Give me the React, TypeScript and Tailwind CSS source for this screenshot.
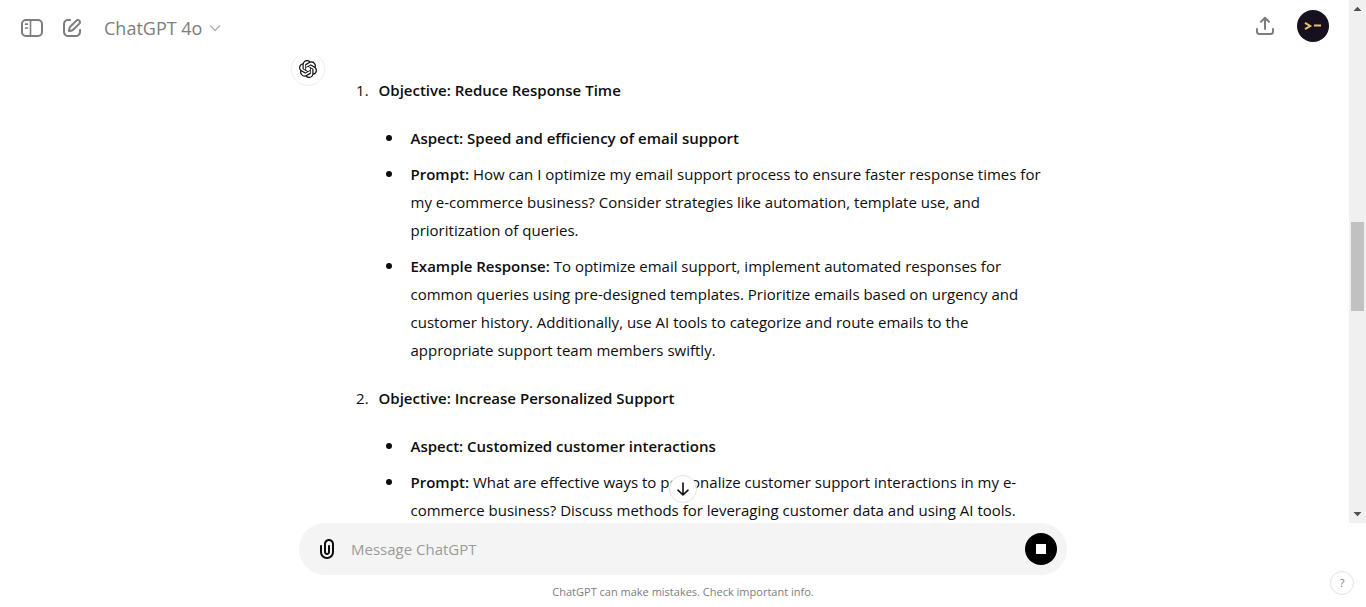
import { useState } from 'react';
import { SiOpenai } from 'react-icons/si';

const objectives = [
  {
    title: 'Objective: Reduce Response Time',
    points: [
      { label: 'Aspect: Speed and efficiency of email support', text: '' },
      {
        label: 'Prompt:',
        text: 'How can I optimize my email support process to ensure faster response times for my e-commerce business? Consider strategies like automation, template use, and prioritization of queries.',
      },
      {
        label: 'Example Response:',
        text: 'To optimize email support, implement automated responses for common queries using pre-designed templates. Prioritize emails based on urgency and customer history. Additionally, use AI tools to categorize and route emails to the appropriate support team members swiftly.',
      },
    ],
  },
  {
    title: 'Objective: Increase Personalized Support',
    points: [
      { label: 'Aspect: Customized customer interactions', text: '' },
      {
        label: 'Prompt:',
        text: 'What are effective ways to personalize customer support interactions in my e-commerce business? Discuss methods for leveraging customer data and using AI tools.',
      },
    ],
  },
];

function SidebarIcon() {
  return (
    <svg width="24" height="24" viewBox="0 0 24 24" fill="none" stroke="currentColor" strokeWidth="2" strokeLinecap="round">
      <rect x="2" y="4" width="20" height="16" rx="4" />
      <path d="M10.5 4v16" strokeWidth="1.6" />
      <path d="M5.6 8.2h1.8M5.6 12h1.8" strokeWidth="1.7" />
    </svg>
  );
}

function NewChatIcon() {
  return (
    <svg width="24" height="24" viewBox="0 0 24 24" fill="currentColor">
      <path
        fillRule="evenodd"
        clipRule="evenodd"
        d="M15.6729 3.91287C16.8918 2.69392 18.8682 2.69392 20.0871 3.91287C21.3061 5.13182 21.3061 7.10813 20.0871 8.32708L14.1499 14.2643C13.3849 15.0293 12.3925 15.5255 11.3215 15.6785L9.14142 15.9899C8.82983 16.0344 8.51546 15.9297 8.29289 15.7071C8.07033 15.4845 7.96554 15.1701 8.01005 14.8586L8.32149 12.6785C8.47449 11.6075 8.97072 10.615 9.7357 9.85006L15.6729 3.91287ZM18.6729 5.32708C18.235 4.88918 17.525 4.88918 17.0871 5.32708L11.1499 11.2643C10.6909 11.7233 10.3932 12.3187 10.3014 12.9613L10.1785 13.8215L11.0386 13.6986C11.6812 13.6068 12.2767 13.3091 12.7357 12.8501L18.6729 6.91287C19.1108 6.47497 19.1108 5.76499 18.6729 5.32708ZM11 3.99929C11.0004 4.55157 10.5531 4.99963 10.0008 5.00007C9.00227 5.00084 8.29769 5.00827 7.74651 5.06064C7.20685 5.11191 6.88488 5.20117 6.63803 5.32695C6.07354 5.61457 5.6146 6.07351 5.32698 6.63799C5.19279 6.90135 5.10062 7.24904 5.05118 7.8542C5.00078 8.47105 5 9.26336 5 10.4V13.6C5 14.7366 5.00078 15.5289 5.05118 16.1457C5.10062 16.7509 5.19279 17.0986 5.32698 17.3619C5.6146 17.9264 6.07354 18.3854 6.63803 18.673C6.90138 18.8072 7.24907 18.8993 7.85424 18.9488C8.47108 18.9992 9.26339 19 10.4 19H13.6C14.7366 19 15.5289 18.9992 16.1458 18.9488C16.7509 18.8993 17.0986 18.8072 17.362 18.673C17.9265 18.3854 18.3854 17.9264 18.673 17.3619C18.7988 17.1151 18.8881 16.7931 18.9393 16.2535C18.9917 15.7023 18.9991 14.9977 18.9999 13.9992C19.0003 13.4469 19.4484 12.9995 20.0007 13C20.553 13.0004 21.0003 13.4485 20.9999 14.0007C20.9991 14.9789 20.9932 15.7808 20.9304 16.4426C20.8664 17.116 20.7385 17.7136 20.455 18.2699C19.9757 19.2107 19.2108 19.9756 18.27 20.455C17.6777 20.7568 17.0375 20.8826 16.3086 20.9421C15.6008 21 14.7266 21 13.6428 21H10.3572C9.27339 21 8.39925 21 7.69138 20.9421C6.96253 20.8826 6.32234 20.7568 5.73005 20.455C4.78924 19.9756 4.02433 19.2107 3.54497 18.2699C3.24318 17.6776 3.11737 17.0374 3.05782 16.3086C2.99998 15.6007 2.99999 14.7266 3 13.6428V10.3572C2.99999 9.27337 2.99998 8.39922 3.05782 7.69134C3.11737 6.96249 3.24318 6.3223 3.54497 5.73001C4.02433 4.7892 4.78924 4.0243 5.73005 3.54493C6.28633 3.26149 6.88399 3.13358 7.55735 3.06961C8.21919 3.00673 9.02103 3.00083 9.99922 3.00007C10.5515 2.99964 10.9996 3.447 11 3.99929Z"
      />
    </svg>
  );
}

function ShareIcon() {
  return (
    <svg width="24" height="24" viewBox="0 0 24 24" fill="none" stroke="currentColor" strokeWidth="2" strokeLinecap="round" strokeLinejoin="round">
      <path d="M12 15V4M8 7.7l4-4 4 4" />
      <path d="M4 15v2.5A2.5 2.5 0 0 0 6.5 20h11a2.5 2.5 0 0 0 2.5-2.5V15" />
    </svg>
  );
}

function PaperclipIcon() {
  return (
    <svg width="24" height="24" viewBox="0 0 24 24" fill="currentColor">
      <path
        fillRule="evenodd"
        clipRule="evenodd"
        d="M9 7C9 4.23858 11.2386 2 14 2C16.7614 2 19 4.23858 19 7V15C19 18.866 15.866 22 12 22C8.13401 22 5 18.866 5 15V9C5 8.44772 5.44772 8 6 8C6.55228 8 7 8.44772 7 9V15C7 17.7614 9.23858 20 12 20C14.7614 20 17 17.7614 17 15V7C17 5.34315 15.6569 4 14 4C12.3431 4 11 5.34315 11 7V15C11 15.5523 11.4477 16 12 16C12.5523 16 13 15.5523 13 15V9C13 8.44772 13.4477 8 14 8C14.5523 8 15 8.44772 15 9V15C15 16.6569 13.6569 18 12 18C10.3431 18 9 16.6569 9 15V7Z"
      />
    </svg>
  );
}

function Header() {
  return (
    <header className="flex h-14 shrink-0 items-center justify-between px-5 text-[#7d7d7d]">
      <div className="flex items-center gap-4">
        <button type="button" aria-label="Open sidebar">
          <SidebarIcon />
        </button>
        <button type="button" aria-label="New chat">
          <NewChatIcon />
        </button>
        <button type="button" className="ml-1 flex items-center gap-1 text-lg font-medium">
          ChatGPT 4o
          <svg width="18" height="18" viewBox="0 0 18 18" fill="none" stroke="#b4b4b4" strokeWidth="1.5" strokeLinecap="round" strokeLinejoin="round">
            <path d="M4.5 7l4.5 4.5L13.5 7" />
          </svg>
        </button>
      </div>
      <div className="flex items-center gap-5 pb-1">
        <button type="button" aria-label="Share">
          <ShareIcon />
        </button>
        <button type="button" aria-label="Account" className="h-8 w-8 overflow-hidden rounded-full bg-[#17111f]">
          <svg width="32" height="32" viewBox="0 0 32 32" fill="none" stroke="#e9c465" strokeWidth="2">
            <path d="M8 12.8l5.2 3.2L8 19.2M17 15.6h7" />
          </svg>
        </button>
      </div>
    </header>
  );
}

function Message() {
  return (
    <article className="mx-auto -mt-1 flex w-full max-w-3xl">
      <div className="flex h-[34px] w-[34px] shrink-0 items-center justify-center rounded-full border border-[#ececec]">
        <SiOpenai size={18} />
      </div>
      <ol className="min-w-0 flex-1 list-decimal space-y-5 pl-12 pr-2 pt-6 text-[15px] leading-7">
        {objectives.map((objective) => (
          <li key={objective.title} className="pl-[6px]">
            <strong className="font-semibold">{objective.title}</strong>
            <ul className="mt-5 list-disc space-y-2 pl-[26px]">
              {objective.points.map((point) => (
                <li key={point.label} className="pl-[6px] marker:text-lg marker:leading-none">
                  <strong className="font-semibold">{point.label}</strong> {point.text}
                </li>
              ))}
            </ul>
          </li>
        ))}
      </ol>
    </article>
  );
}

function Scrollbar() {
  return (
    <div className="flex w-[17px] shrink-0 flex-col items-center bg-[#f0f0f0]" aria-hidden="true">
      <svg width="17" height="17" viewBox="0 0 17 17" fill="#505050">
        <path d="M4.5 11l4-4.2 4 4.2z" />
      </svg>
      <div className="grow-[205]" />
      <div className="w-[13px] grow-[89] bg-[#c1c1c1]" />
      <div className="grow-[195]" />
      <svg width="17" height="17" viewBox="0 0 17 17" fill="#505050">
        <path d="M4.5 6l4 4.2 4-4.2z" />
      </svg>
    </div>
  );
}

export default function App() {
  const [message, setMessage] = useState('');

  return (
    <div className="flex h-screen flex-col overflow-hidden bg-white font-['Open_Sans','Noto_Sans',sans-serif] text-[#0d0d0d]">
      <div className="relative flex min-h-0 flex-1">
        <div className="flex min-w-0 flex-1 flex-col">
          <Header />
          <main className="min-h-0 flex-1 overflow-hidden">
            <Message />
          </main>
        </div>
        <Scrollbar />
        <button
          type="button"
          aria-label="Scroll to bottom"
          className="absolute bottom-5 left-1/2 flex h-7 w-7 -translate-x-1/2 items-center justify-center rounded-full border border-[#e3e3e3] bg-white"
        >
          <svg width="18" height="18" viewBox="0 0 18 18" fill="none" stroke="currentColor" strokeWidth="1.6" strokeLinecap="round" strokeLinejoin="round">
            <path d="M9 3v12M4 10.2L9 15l5-4.8" />
          </svg>
        </button>
      </div>

      <footer className="relative shrink-0">
        <form
          onSubmit={(e) => e.preventDefault()}
          className="mx-auto flex h-[52px] w-full max-w-3xl items-center rounded-full bg-[#f4f4f4] pl-4 pr-[10px]"
        >
          <button type="button" aria-label="Attach files">
            <PaperclipIcon />
          </button>
          <input
            type="text"
            aria-label="Message ChatGPT"
            placeholder="Message ChatGPT"
            value={message}
            onChange={(e) => setMessage(e.target.value)}
            className="min-w-0 flex-1 bg-transparent px-3 text-[15px] outline-none placeholder:text-[#9b9b9b]"
          />
          <button type="button" aria-label="Stop generating" className="flex h-8 w-8 items-center justify-center rounded-full bg-black">
            <span className="h-[10px] w-[10px] bg-white" />
          </button>
        </form>
        <p className="pb-[6px] pt-2 text-center text-[11px] leading-[18px] text-[#7d7d7d]">
          ChatGPT can make mistakes. Check important info.
        </p>
        <button
          type="button"
          aria-label="Help"
          className="absolute bottom-3 right-3 flex h-6 w-6 items-center justify-center rounded-full border border-[#e3e3e3] text-[11px] text-[#7d7d7d]"
        >
          ?
        </button>
      </footer>
    </div>
  );
}
